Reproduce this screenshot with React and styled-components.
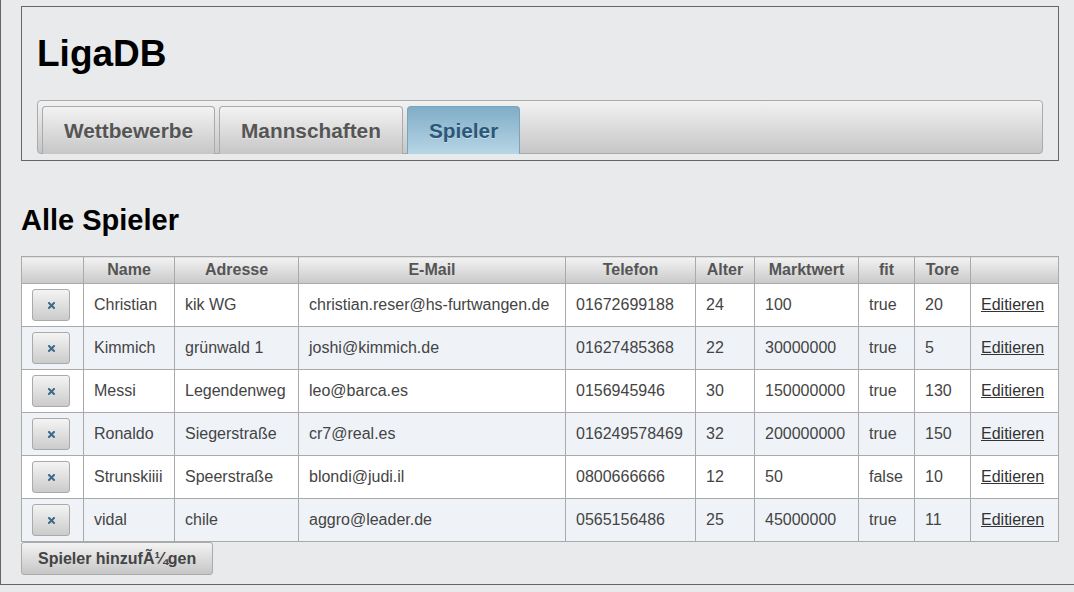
import React from 'react';
import styled, { createGlobalStyle } from 'styled-components';

const GlobalStyle = createGlobalStyle`
  html, body {
    margin: 0;
    padding: 0;
    background: #e9eaec;
    font-family: "Liberation Sans", Arial, sans-serif;
  }
`;

const Page = styled.div`
  border-left: 1px solid #666;
  border-bottom: 1px solid #666;
  padding: 6px 15px 9px 20px;
`;

const Header = styled.header`
  border: 1px solid #666;
  padding: 0 15px 6px;
`;

const Title = styled.h1`
  margin: 26px 0 26px;
  font-size: 37px;
  line-height: 41px;
  font-weight: bold;
  color: #000;
`;

const TabBar = styled.nav`
  display: flex;
  gap: 4px;
  height: 54px;
  box-sizing: border-box;
  padding: 5px 4px 0;
  border: 1px solid #aaa;
  border-radius: 4px;
  background: linear-gradient(#f2f2f2, #c6c6c6);
`;

const Tab = styled.a`
  display: flex;
  align-items: center;
  height: 48px;
  box-sizing: border-box;
  padding: 0 21px;
  border: 1px solid ${({ active }) => (active ? '#79a4bf' : '#aaa')};
  border-bottom: none;
  border-radius: 4px 4px 0 0;
  background: ${({ active }) =>
    active ? 'linear-gradient(#80adc7, #b7d5e5)' : 'linear-gradient(#f3f3f3, #c6c6c6)'};
  color: ${({ active }) => (active ? '#2b5877' : '#555')};
  font-size: 20.8px;
  line-height: 24px;
  font-weight: bold;
  text-shadow: 0 1px 0 rgba(255, 255, 255, 0.35);
  cursor: pointer;
`;

const Heading = styled.h2`
  margin: 43px 0 20px;
  font-size: 29px;
  line-height: 32px;
  font-weight: bold;
  color: #000;
`;

const Table = styled.table`
  border-collapse: collapse;
  table-layout: fixed;
  width: 1037px;
  font-size: 16px;
  color: #444;
`;

const Th = styled.th`
  height: 27px;
  box-sizing: border-box;
  padding: 0 4px;
  border: 1px solid #aaa;
  background: linear-gradient(#f3f3f3, #c9c9c9);
  color: #555;
  font-weight: bold;
  text-align: center;
  line-height: 18px;
`;

const Row = styled.tr`
  background: ${({ alt }) => (alt ? '#eff3f8' : '#fff')};
`;

const Td = styled.td`
  height: 43px;
  box-sizing: border-box;
  padding: 5px 10px 5px;
  border: 1px solid #aaa;
  vertical-align: middle;
  white-space: nowrap;
  line-height: 18px;
`;

const DeleteButton = styled.button`
  display: flex;
  align-items: center;
  justify-content: center;
  width: 38px;
  height: 32px;
  padding: 0;
  border: 1px solid #aaa;
  border-radius: 3px;
  background: linear-gradient(#f4f4f4, #cbcbcb);
  cursor: pointer;
`;

const EditLink = styled.a`
  color: #333;
  text-decoration: underline;
  cursor: pointer;
`;

const AddButton = styled.button`
  display: block;
  height: 33px;
  padding: 0 16px;
  border: 1px solid #aaa;
  border-radius: 3px;
  background: linear-gradient(#f3f3f3, #c6c6c6);
  color: #444;
  font-family: "Liberation Sans", Arial, sans-serif;
  font-size: 16px;
  font-weight: bold;
  cursor: pointer;
`;

const CrossIcon = () => (
  <svg width="7" height="7" viewBox="0 0 7 7">
    <path d="M1 1 L6 6 M6 1 L1 6" stroke="#3d6a88" strokeWidth="2" strokeLinecap="square" />
  </svg>
);

const columns = [
  { label: '', width: 62 },
  { label: 'Name', width: 91 },
  { label: 'Adresse', width: 124 },
  { label: 'E-Mail', width: 267 },
  { label: 'Telefon', width: 130 },
  { label: 'Alter', width: 59 },
  { label: 'Marktwert', width: 104 },
  { label: 'fit', width: 56 },
  { label: 'Tore', width: 56 },
  { label: '', width: 88 },
];

const players = [
  ['Christian', 'kik WG', 'christian.reser@hs-furtwangen.de', '01672699188', '24', '100', 'true', '20'],
  ['Kimmich', 'grünwald 1', 'joshi@kimmich.de', '01627485368', '22', '30000000', 'true', '5'],
  ['Messi', 'Legendenweg', 'leo@barca.es', '0156945946', '30', '150000000', 'true', '130'],
  ['Ronaldo', 'Siegerstraße', 'cr7@real.es', '016249578469', '32', '200000000', 'true', '150'],
  ['Strunskiiii', 'Speerstraße', 'blondi@judi.il', '0800666666', '12', '50', 'false', '10'],
  ['vidal', 'chile', 'aggro@leader.de', '0565156486', '25', '45000000', 'true', '11'],
];

const tabs = ['Wettbewerbe', 'Mannschaften', 'Spieler'];

const App = () => (
  <>
    <GlobalStyle />
    <Page>
      <Header>
        <Title>LigaDB</Title>
        <TabBar>
          {tabs.map((t) => (
            <Tab key={t} active={t === 'Spieler' ? 1 : 0}>
              {t}
            </Tab>
          ))}
        </TabBar>
      </Header>
      <Heading>Alle Spieler</Heading>
      <Table>
        <colgroup>
          {columns.map((c, i) => (
            <col key={i} style={{ width: c.width }} />
          ))}
        </colgroup>
        <thead>
          <tr>
            {columns.map((c, i) => (
              <Th key={i}>{c.label}</Th>
            ))}
          </tr>
        </thead>
        <tbody>
          {players.map((p, i) => (
            <Row key={p[0]} alt={i % 2 === 1 ? 1 : 0}>
              <Td>
                <DeleteButton aria-label="Löschen">
                  <CrossIcon />
                </DeleteButton>
              </Td>
              {p.map((v, j) => (
                <Td key={j}>{v}</Td>
              ))}
              <Td>
                <EditLink>Editieren</EditLink>
              </Td>
            </Row>
          ))}
        </tbody>
      </Table>
      <AddButton>Spieler hinzufÃ¼gen</AddButton>
    </Page>
  </>
);

export default App;
